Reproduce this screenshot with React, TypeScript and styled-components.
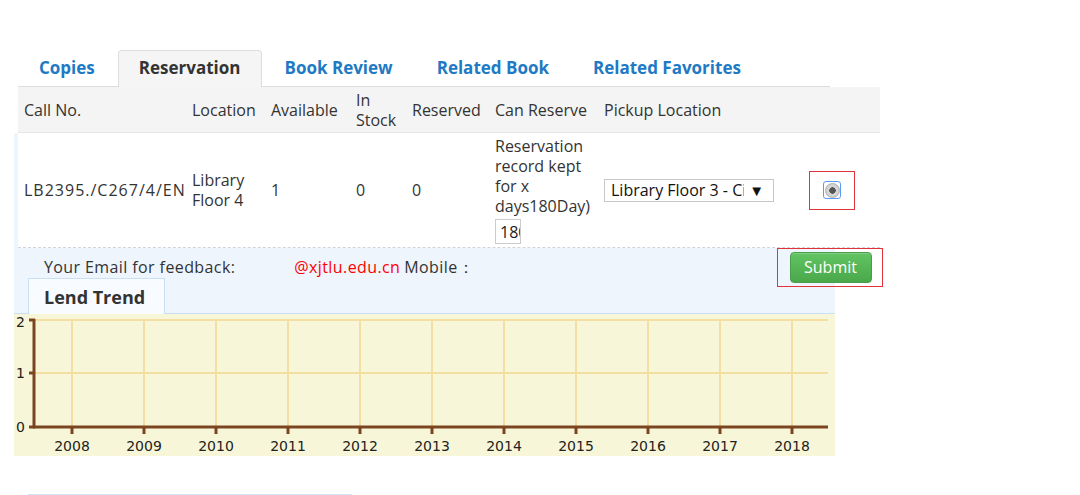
import React from "react";
import styled, { createGlobalStyle } from "styled-components";

const Global = createGlobalStyle`
  html, body { margin: 0; padding: 0; background: #fff; }
  body { font-family: "Open Sans", "Liberation Sans", sans-serif; color: #333; }
  * { box-sizing: border-box; }
`;

const Page = styled.div`
  padding: 50px 0 0 14px;
  width: 1080px;
  height: 495px;
  overflow: hidden;
`;

const Tabs = styled.ul`
  list-style: none;
  margin: 0 0 0 4px;
  padding: 0;
  display: flex;
  width: 812px;
  height: 37px;
  border-bottom: 1px solid #dddddd;
`;

const Tab = styled.li<{ $active?: boolean }>`
  height: 37px;
  padding: 0 20px 3px;
  margin-right: 2px;
  display: flex;
  align-items: center;
  font-size: 17px;
  font-weight: 700;
  color: ${(p) => (p.$active ? "#333" : "#1e7ac4")};
  background: ${(p) => (p.$active ? "#f5f5f5" : "transparent")};
  border: 1px solid ${(p) => (p.$active ? "#dddddd" : "transparent")};
  border-bottom: none;
  border-radius: 4px 4px 0 0;
`;

const cols = "168px 79px 85px 56px 83px 109px 205px 77px";

const HeaderRow = styled.div`
  margin-left: 4px;
  width: 862px;
  height: 46px;
  display: grid;
  grid-template-columns: ${cols};
  align-items: center;
  background: #f4f4f4;
  border-bottom: 1px solid #e6e6e6;
  font-size: 16px;
  line-height: 20px;
`;

const Cell = styled.div`
  padding-left: 6px;
`;

const CallNo = styled(Cell)`
  letter-spacing: 1px;
`;

const Panel = styled.div`
  width: 821px;
  background: #eef5fd;
  border-bottom: 1px solid #c8dff4;
`;

const DataRow = styled.div`
  margin-left: 4px;
  width: 862px;
  height: 115px;
  display: grid;
  grid-template-columns: ${cols};
  align-items: center;
  background: #fff;
  border-bottom: 1px dashed #cfd4da;
  font-size: 16px;
  line-height: 20px;
`;

const DaysInput = styled.input`
  display: block;
  width: 26px;
  height: 25px;
  margin-top: 3px;
  padding: 0 0 0 4px;
  border: 1px solid #cccccc;
  font-family: "Open Sans", sans-serif;
  font-size: 16px;
  color: #222;
  background: #fff;
  outline: none;
`;

const FakeSelect = styled.div`
  width: 170px;
  height: 23px;
  border: 1px solid #c8c8c8;
  background: #fff;
  display: flex;
  align-items: center;
  padding: 0 9px 0 6px;
  font-size: 16px;
  color: #111;
  overflow: hidden;
`;

const SelectText = styled.span`
  flex: 1;
  white-space: nowrap;
  overflow: hidden;
`;

const Arrow = styled.span`
  font-size: 15px;
  margin-left: 5px;
  color: #111;
`;

const Outline = styled.div`
  border: 1px solid #e2333b;
  display: flex;
  align-items: center;
  justify-content: center;
`;

const RadioBox = styled(Outline)`
  width: 46px;
  height: 39px;
`;

const RadioFocus = styled.span`
  width: 18px;
  height: 18px;
  border: 1px solid #5b9bf3;
  border-radius: 3px;
  display: flex;
  align-items: center;
  justify-content: center;
`;

const RadioCircle = styled.span`
  width: 15px;
  height: 15px;
  border-radius: 50%;
  background: radial-gradient(circle at 50% 50%, #555 0 3px, #d9d9d9 3.5px, #c4c4c4 100%);
  border: 1px solid #b0b0b0;
`;

const FeedbackRow = styled.div`
  height: 38px;
  display: flex;
  align-items: center;
  padding-left: 30px;
  font-size: 16px;
  color: #333;
`;

const Label = styled.span`
  letter-spacing: 0.4px;
`;

const Email = styled.span`
  color: #ff0000;
  margin-left: 59px;
  margin-right: 4px;
  letter-spacing: 0.4px;
`;

const SubmitBox = styled(Outline)`
  margin-left: auto;
  margin-right: -48px;
  width: 106px;
  height: 39px;
  padding-left: 1px;
`;

const SubmitButton = styled.button`
  width: 82px;
  height: 31px;
  border-radius: 4px;
  border: 1px solid #4a9d4a;
  background: linear-gradient(#62c462, #4aa84a);
  color: #fff;
  font-family: "Open Sans", sans-serif;
  font-size: 16px;
  padding: 0;
  box-shadow: inset 0 1px 0 rgba(255, 255, 255, 0.2);
`;

const LendTab = styled.div`
  margin: -8px 0 -1px 14px;
  width: 137px;
  height: 36px;
  border: 1px solid #c8dff4;
  border-bottom: none;
  background: #f8fbff;
  display: flex;
  align-items: center;
  padding-left: 15px;
  font-size: 18px;
  font-weight: 700;
  color: #333;
  position: relative;
`;

const ChartArea = styled.div`
  width: 821px;
  height: 142px;
  background: #f8f6d8;
`;

const NextTab = styled.div`
  margin: 38px 0 0 14px;
  width: 324px;
  height: 4px;
  border-top: 1px solid #d0e4f6;
  background: #f8fbff;
`;

const years = [2008, 2009, 2010, 2011, 2012, 2013, 2014, 2015, 2016, 2017, 2018];
const gx = (i: number) => 58 + 72 * i;

function Chart() {
  const axis = "#7b4520";
  const grid = "#f4dfa2";
  return (
    <svg width="821" height="142" style={{ display: "block" }}>
      {years.map((y, i) => (
        <line key={"v" + y} x1={gx(i)} y1={6} x2={gx(i)} y2={113} stroke={grid} strokeWidth={2} />
      ))}
      <line x1={20} y1={6} x2={814} y2={6} stroke={grid} strokeWidth={2} />
      <line x1={20} y1={59} x2={814} y2={59} stroke={grid} strokeWidth={2} />
      {[6, 59, 113].map((y) => (
        <line key={"t" + y} x1={15} y1={y} x2={21} y2={y} stroke={axis} strokeWidth={3} />
      ))}
      {years.map((y, i) => (
        <line key={"xt" + y} x1={gx(i)} y1={113} x2={gx(i)} y2={120} stroke={axis} strokeWidth={3} />
      ))}
      <line x1={20} y1={5} x2={20} y2={114} stroke={axis} strokeWidth={3} />
      <line x1={19} y1={113} x2={814} y2={113} stroke={axis} strokeWidth={3} />
      <g fontFamily="DejaVu Sans, Verdana, sans-serif" fontSize="14" fill="#222">
        <text x={11} y={13} textAnchor="end">2</text>
        <text x={11} y={64} textAnchor="end">1</text>
        <text x={11} y={118} textAnchor="end">0</text>
        {years.map((y, i) => (
          <text key={"l" + y} x={gx(i)} y={137} textAnchor="middle">
            {y}
          </text>
        ))}
      </g>
    </svg>
  );
}

export default function App() {
  return (
    <>
      <Global />
      <Page>
        <Tabs>
          <Tab>Copies</Tab>
          <Tab $active>Reservation</Tab>
          <Tab>Book Review</Tab>
          <Tab>Related Book</Tab>
          <Tab>Related Favorites</Tab>
        </Tabs>
        <HeaderRow>
          <Cell>Call No.</Cell>
          <Cell>Location</Cell>
          <Cell>Available</Cell>
          <Cell>In Stock</Cell>
          <Cell>Reserved</Cell>
          <Cell>Can Reserve</Cell>
          <Cell>Pickup Location</Cell>
          <Cell />
        </HeaderRow>
        <Panel>
          <DataRow>
            <CallNo>LB2395./C267/4/EN</CallNo>
            <Cell>Library Floor 4</Cell>
            <Cell>1</Cell>
            <Cell>0</Cell>
            <Cell>0</Cell>
            <Cell>
              Reservation record kept for x days180Day)
              <DaysInput defaultValue="180" readOnly />
            </Cell>
            <Cell>
              <FakeSelect>
                <SelectText>Library Floor 3 - Circulation Desk</SelectText>
                <Arrow>▼</Arrow>
              </FakeSelect>
            </Cell>
            <Cell>
              <RadioBox>
                <RadioFocus>
                  <RadioCircle />
                </RadioFocus>
              </RadioBox>
            </Cell>
          </DataRow>
          <FeedbackRow>
            <Label>Your Email for feedback:</Label>
            <Email>@xjtlu.edu.cn</Email>
            <Label>Mobile：</Label>
            <SubmitBox>
              <SubmitButton>Submit</SubmitButton>
            </SubmitBox>
          </FeedbackRow>
          <LendTab>Lend Trend</LendTab>
        </Panel>
        <ChartArea>
          <Chart />
        </ChartArea>
        <NextTab />
      </Page>
    </>
  );
}
